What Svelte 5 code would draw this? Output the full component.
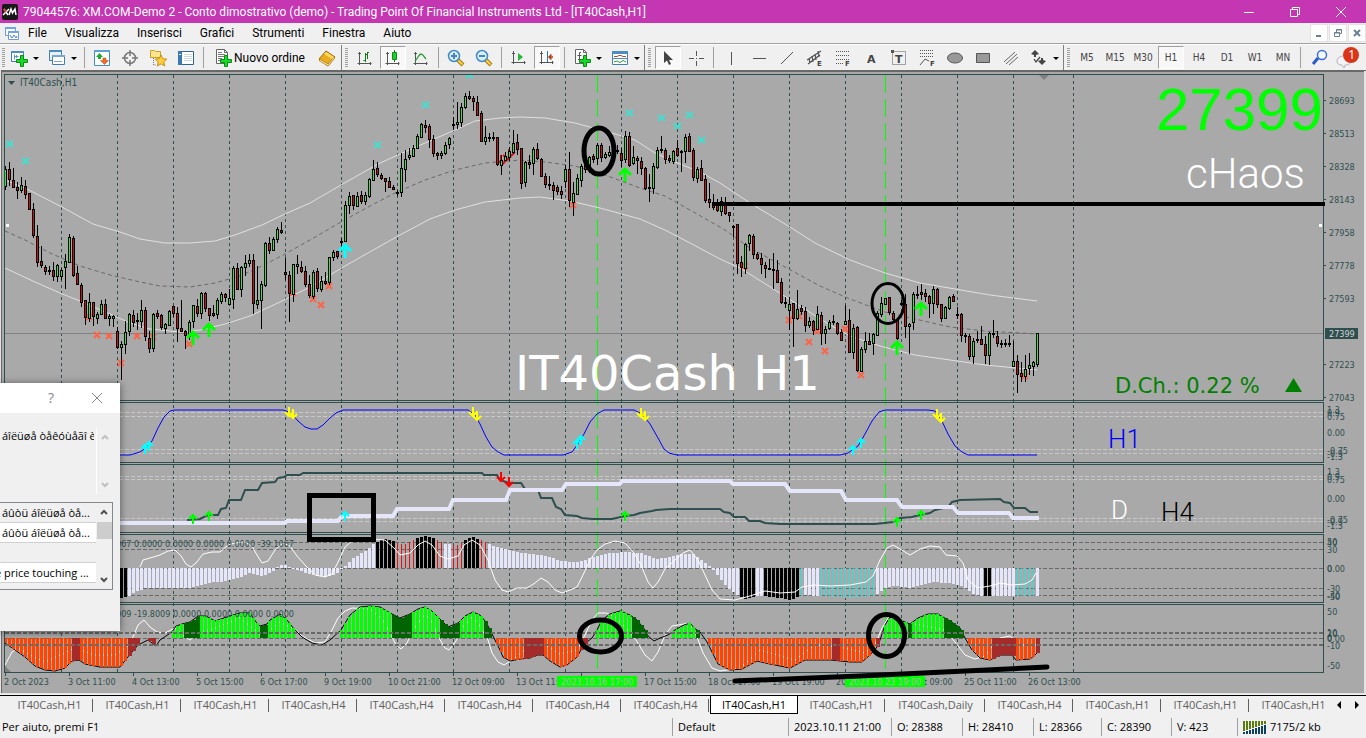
<script>
  const menus = ['File', 'Visualizza', 'Inserisci', 'Grafici', 'Strumenti', 'Finestra', 'Aiuto'];

  const tools = [
    { drop: 'newchart', label: 'Nuovo grafico' },
    { drop: 'profiles', label: 'Profili' },
    'sep',
    { icon: 'market', label: 'Market Watch' },
    { icon: 'target', label: 'Finestra dati' },
    { icon: 'navigator', label: 'Navigatore' },
    { icon: 'terminal', label: 'Terminale' },
    'sep',
    { icon: 'order', label: 'Nuovo ordine', text: true },
    { icon: 'editor', label: 'MetaEditor' },
    'group',
    { icon: 'bars', label: 'Grafico a barre' },
    { icon: 'candles', label: 'Candele', on: true },
    { icon: 'line', label: 'Grafico a linea' },
    'sep',
    { icon: 'zoomin', label: 'Ingrandisci' },
    { icon: 'zoomout', label: 'Riduci' },
    'sep',
    { icon: 'scroll', label: 'Scorrimento automatico' },
    { icon: 'shift', label: 'Spostamento grafico', on: true },
    'sep',
    { drop: 'indicators', label: 'Indicatori' },
    { drop: 'templates', label: 'Modelli' },
    'group',
    { icon: 'cursor', label: 'Cursore', on: true },
    { icon: 'cross', label: 'Mirino' },
    'sep',
    { icon: 'vline', label: 'Linea verticale' },
    { icon: 'hline', label: 'Linea orizzontale' },
    { icon: 'trend', label: 'Trendline' },
    { icon: 'channel', label: 'Canale equidistante' },
    { icon: 'fibo', label: 'Fibonacci' },
    { icon: 'text', label: 'Testo' },
    { icon: 'label', label: 'Etichetta' },
    { icon: 'fan', label: 'Espansione Fibonacci' },
    { icon: 'ellipse', label: 'Ellisse' },
    { icon: 'rect', label: 'Rettangolo' },
    { icon: 'cycle', label: 'Linee cicliche' },
    { drop: 'arrows', label: 'Frecce' },
    'group'
  ];
  const frames = ['M5', 'M15', 'M30', 'H1', 'H4', 'D1', 'W1', 'MN'];

  const tabs = ['H1', 'H1', 'H1', 'H4', 'H4', 'H4', 'H4', 'H4', 'H1', 'H1', 'Daily', 'H4', 'H1', 'H1', 'H1'];
  const activeTab = 8;

  // high, open, close, low for each hour, in chart units
  const candles = `166,186,169,190 162,169,179,186 168,180,187,188 182,187,190,199 177,190,185,193 180,186,194,199
    193,193,209,210 203,209,235,238 225,236,262,267 246,261,265,268 265,267,271,275 266,270,271,275 262,270,276,281
    264,276,265,282 268,276,270,280 254,267,261,289 234,262,237,263 236,238,275,277 266,273,284,285 283,285,302,307
    300,300,317,325 293,318,302,322 302,302,316,326 312,318,314,324 300,314,304,315 299,304,318,319 314,318,316,326
    315,318,316,327 327,331,347,349 341,347,344,380 321,344,332,354 313,331,314,336 310,315,322,327 313,320,321,330
    300,321,310,328 307,310,336,341 331,338,348,353 313,348,314,352 310,313,316,319 314,315,327,330 323,328,324,334
    310,325,311,326 306,306,313,317 307,313,328,342 300,328,331,332 330,331,335,349 320,336,322,340 305,321,305,328
    299,306,313,317 292,313,293,319 292,293,308,312 308,308,315,321 305,313,315,317 298,314,300,319 292,301,294,304
    293,294,297,302 289,304,298,305 266,299,268,309 263,268,289,290 266,289,267,297 255,267,263,276 254,263,260,267
    254,260,303,314 266,304,300,309 281,300,284,329 242,285,243,287 237,243,250,254 237,250,239,251 227,239,229,243
    222,230,232,234 258,272,274,280 271,275,293,322 264,294,264,302 255,266,264,274 261,267,271,273 266,271,284,287
    275,284,295,298 270,296,272,299 268,271,288,292 276,289,281,292 272,281,283,285 257,282,257,285 250,257,252,261
    251,251,256,259 238,241,242,248 201,241,205,242 192,205,196,214 195,195,205,210 192,206,196,207 191,195,201,204
    192,201,195,205 178,196,179,198 160,180,169,180 162,168,174,177 173,175,178,180 178,178,181,192 177,181,187,188
    185,187,189,190 190,192,193,196 153,192,168,197 150,169,159,182 148,157,155,160 145,156,148,156 134,148,136,149
    123,137,124,138 120,125,127,133 124,126,139,148 135,139,153,157 152,153,155,160 151,155,153,159 142,153,145,155
    137,144,138,149 117,125,124,130 102,124,122,129 103,122,107,127 93,107,96,109 91,96,98,100 96,98,101,111
    96,102,115,116 111,113,141,142 126,141,137,145 133,138,137,142 132,137,138,141 137,137,164,166 155,165,160,175
    152,160,156,160 147,157,151,161 130,152,143,154 134,142,149,155 148,148,183,189 161,182,162,187 155,162,164,169
    147,163,149,175 143,149,158,160 158,159,176,177 173,176,184,188 176,184,185,190 182,185,190,200 185,187,191,195
    186,191,194,199 165,181,169,188 152,169,200,207 182,202,193,216 174,194,178,195 164,180,166,187 164,165,169,173
    156,170,157,173 154,156,159,163 143,158,145,165 143,145,157,162 152,157,154,159 146,155,152,157 148,150,152,154
    145,150,151,154 148,153,160,167 131,159,136,163 132,136,165,167 146,163,157,165 156,158,160,174 157,161,168,175
    167,168,188,190 174,187,188,202 163,188,166,194 147,167,150,169 136,149,150,153 148,150,159,164 155,158,160,163
    150,161,151,164 140,148,155,157 150,152,151,172 134,151,137,163 133,136,151,152 148,150,177,181 167,178,169,183
    160,168,180,181 175,179,200,203 183,199,202,208 194,203,207,210 199,204,210,212 197,211,201,216 197,203,213,215
    212,212,215,222 225,226,227,237 224,224,263,274 256,262,267,277 243,268,244,274 234,243,235,251 234,236,254,259
    252,254,258,260 253,258,264,274 262,265,268,278 259,268,269,270 253,269,270,289 260,270,282,283 278,282,302,304
    297,302,303,308 297,310,304,330 303,303,318,347 290,318,309,320 305,308,311,315 307,311,325,332 317,325,321,328
    320,321,330,335 306,329,314,330 312,315,333,345 326,333,329,344 320,328,322,330 315,321,322,325 322,323,333,335
    329,332,340,341 305,324,321,325 309,320,352,353 324,352,328,359 326,327,370,372 347,371,349,372 332,349,341,353
    333,341,344,344 333,343,334,355 311,335,313,336 297,314,303,317 298,304,298,305 297,297,312,315 311,313,319,322
    318,320,338,340 300,303,304,306 294,304,326,338 323,326,324,354 292,322,294,330 286,294,295,299 284,292,294,300
    289,293,296,302 295,296,303,318 286,303,289,314 288,289,304,308 304,304,318,322 306,318,307,319 296,308,297,310
    294,296,301,302 307,314,315,319 313,314,335,342 333,335,336,343 334,336,356,360 338,356,341,364 331,340,339,343
    326,339,344,345 336,344,355,364 332,355,333,365 320,333,334,338 331,336,343,347 340,343,344,348 339,344,343,347
    335,343,344,347 341,366,361,367 355,361,374,393 362,373,376,382 355,376,369,382 353,368,365,375 361,366,362,376
    333,364,333,367`
    .trim()
    .split(/\s+/)
    .map((c) => c.split(',').map(Number));

  const box = (x, y, w, h) => `M${x} ${y}h${w}v${h}h${-w}z`;

  let black = '';
  let rising = '';
  let falling = '';
  candles.forEach(([high, open, close, low], i) => {
    const x = 5 + i * 4;
    const top = Math.min(open, close);
    const height = Math.abs(close - open) + 1;
    black += box(x, high, 1, low - high) + box(x - 1, top, 3, height);
    if (height > 2) {
      if (close < open) rising += box(x, top + 1, 1, height - 2);
      else falling += box(x, top + 1, 1, height - 2);
    }
  });

  const upper = '5,180 27,189 60,206 93,224 120,232 140,239 165,243 190,243 215,241 235,235 262,225 285,214 310,203 341,185 378,164 400,154 425,143 455,130 475,121 500,118 520,117 545,118 575,123 605,131 635,140 655,153 680,164 700,172 720,183 750,203 790,227 815,243 850,260 885,273 920,283 955,289 990,295 1037,301';
  const middle = '5,231 25,240 50,253 80,266 110,275 140,282 160,286 190,287 215,283 240,276 262,266 285,254 310,240 341,222 370,206 395,193 425,180 455,170 485,163 520,160 545,162 575,166 605,175 640,188 665,196 690,210 725,230 750,248 785,267 820,286 850,299 885,312 915,319 950,327 985,331 1037,334';
  const lower = '5,268 35,282 60,293 80,301 110,314 130,323 150,329 180,332 200,330 225,324 250,316 280,302 310,287 330,275 345,266 375,249 400,235 430,219 455,210 485,202 520,198 540,197 570,201 600,208 640,219 665,230 690,243 720,259 740,268 775,290 800,306 830,325 850,336 880,346 915,355 950,360 985,365 1037,370';

  const blue = '100,455 130,455 140,452 146,448 152,441 158,428 164,417 170,411 174,410 283,410 286,411 292,414 298,421 305,427 311,429 317,429 323,425 330,418 336,413 343,410 468,410 475,415 480,424 486,437 492,447 498,452 504,455 563,455 572,452 578,444 584,434 590,422 597,414 604,410 634,410 642,414 650,424 658,438 664,449 669,453 677,455 840,455 848,453 858,446 865,434 872,421 879,412 885,410 928,410 935,411 941,419 948,434 955,446 962,452 968,455 1037,455';
  const slate = '187,520 200,519 208,515 218,515 221,509 226,508 229,500 241,500 245,490 258,490 262,483 275,482 278,478 284,477 287,475 300,475 303,473 482,473 484,475 497,475 500,480 509,483 521,483 525,489 538,490 541,498 552,498 556,507 561,509 565,515 577,516 582,518 592,519 612,519 625,516 634,515 640,513 652,511 656,510 670,509 720,509 724,512 730,513 734,517 745,517 749,521 760,521 765,523 780,524 875,524 893,522 900,518 912,517 920,515 930,513 935,510 948,507 952,502 960,500 1000,499 1004,502 1010,503 1014,508 1025,508 1030,512 1038,512';
  const pale = '100,523 285,523 287,521 338,521 342,516 393,516 397,509 449,509 453,500 506,500 510,490 562,490 566,484 620,484 622,481 730,481 733,484 785,484 790,491 841,491 846,500 897,500 902,507 953,507 958,513 1009,513 1013,518 1039,518';
  const wave3 = '140,567 143,560 150,558 160,555 168,551 175,550 181,556 186,564 191,567 196,563 203,554 212,552 220,552 228,545 235,543 245,542 252,546 257,555 262,563 268,561 275,550 283,543 290,546 297,556 305,565 315,575 325,577 332,574 340,558 345,547 352,541 365,539 385,540 395,549 400,555 410,553 418,545 425,541 432,545 440,556 448,559 458,556 464,545 472,540 480,545 488,560 495,580 502,590 508,592 517,588 527,588 535,583 541,578 548,582 555,590 562,593 570,590 577,587 583,575 590,560 597,550 605,544 615,541 625,543 634,553 641,565 648,582 653,588 658,582 665,569 675,560 683,553 690,550 698,560 705,575 712,590 720,599 735,600 750,596 765,591 780,593 795,592 802,587 815,585 830,586 850,585 866,582 873,576 880,560 887,548 893,545 900,549 910,555 920,549 930,546 940,547 946,555 957,556 963,563 968,580 978,588 990,586 1000,583 1012,585 1025,584 1032,580 1036,573';
  const wave4 = '5,665 12,652 18,648 30,655 45,662 60,655 75,648 95,655 115,655 128,646 133,637 138,625 144,620 150,627 157,632 165,633 175,628 185,637 190,640 198,634 215,628 240,618 255,630 262,636 280,622 294,629 302,636 315,643 325,642 332,630 338,618 345,611 352,608 370,609 383,620 391,635 396,645 401,649 407,643 413,630 425,614 432,622 439,638 445,648 449,650 456,641 462,628 472,617 480,626 488,640 492,653 498,662 504,665 509,662 525,650 540,642 560,654 577,650 585,635 592,620 598,613 606,613 615,617 625,627 636,640 645,655 652,661 658,652 665,635 672,626 684,624 690,623 697,637 703,653 712,668 720,671 740,668 760,650 780,656 795,660 815,645 840,647 865,653 875,645 882,628 890,615 900,622 920,625 945,630 955,642 965,655 975,659 985,656 993,645 1000,638 1010,636 1020,645 1036,645';

  const toPoints = (s) => s.split(' ').map((p) => p.split(',').map(Number));

  // height of a curve at x
  function at(points, x) {
    let i = points.findIndex((p) => p[0] >= x);
    if (i < 0) return points[points.length - 1][1];
    if (i === 0) return points[0][1];
    const [x0, y0] = points[i - 1];
    const [x1, y1] = points[i];
    return Math.round(y0 + ((x - x0) / (x1 - x0)) * (y1 - y0));
  }

  const inside = (ranges, x) => ranges.some(([a, b]) => x >= a && x <= b);

  const env3 = toPoints('118,599 122,598 126,597 130,595 137,591 145,588 190,588 207,583 227,581 240,577 250,573 262,576 273,571 279,565 286,565 292,568 303,572 317,576 327,577 337,573 341,568 345,566 353,558 360,554 368,549 374,543 383,539 393,541 397,543 405,544 413,540 418,538 425,536 434,538 440,541 446,544 458,545 464,540 473,537 481,540 488,544 507,550 523,553 547,556 560,561 577,562 590,558 603,554 623,552 640,553 657,559 670,557 683,554 693,554 703,562 711,567 717,575 725,585 733,592 740,597 745,599 755,596 763,596 780,598 790,600 799,596 805,595 820,596 853,598 873,596 877,594 887,587 897,586 910,588 920,585 933,582 947,583 963,586 973,594 980,596 1036,596');
  const env4 = toPoints('5,643 15,650 25,657 35,666 45,670 55,671 65,668 72,661 79,660 85,664 100,667 120,667 127,658 132,652 138,645 148,640 156,646 160,640 172,632 176,626 182,624 190,622 198,616 206,616 215,621 230,616 240,613 250,613 256,622 260,626 267,624 270,620 280,614 287,620 294,629 302,637 312,643 322,645 330,640 341,630 350,615 360,607 370,606 380,607 392,614 400,618 410,614 418,609 425,607 432,611 440,619 448,627 458,623 465,616 473,612 480,615 486,622 491,632 495,640 500,650 503,657 510,661 520,659 530,658 537,655 543,655 550,661 560,667 567,665 577,657 582,648 587,642 592,638 597,630 602,620 610,614 620,611 630,615 637,620 645,630 648,636 654,641 660,638 668,635 675,630 684,625 690,623 694,628 700,632 707,642 712,652 718,664 730,670 742,669 757,661 770,664 790,668 805,660 831,660 850,662 862,662 870,655 877,647 880,640 885,625 890,617 900,620 910,624 918,618 928,614 938,614 943,617 950,621 960,628 965,638 972,650 980,658 990,660 1000,655 1012,655 1016,660 1030,659 1034,656 1037,653');

  const black3 = [[0, 128], [376, 395], [416, 436], [464, 480], [741, 755], [764, 800], [984, 992]];
  const red3 = [[396, 415], [436, 443], [452, 463], [481, 487]];
  const cyan3 = [[800, 803], [820, 874], [1016, 1035]];
  const lime4 = [[172, 184], [198, 259], [267, 295], [341, 391], [410, 439], [458, 483], [597, 631], [671, 695], [883, 907], [911, 943]];
  const dark4 = [[184, 198], [259, 267], [391, 410], [439, 458], [483, 491], [631, 648], [695, 699], [907, 911], [943, 964]];
  const brown4 = [[71, 79], [127, 139], [147, 155], [523, 543], [580, 588], [831, 838], [875, 880], [991, 1015], [1036, 1040]];
  const orange4 = [[0, 71], [79, 127], [496, 523], [543, 580], [708, 831], [838, 875], [967, 991], [1015, 1036]];

  const fills = { pale: '', black: '', red: '', cyan: '', lime: '', dark: '', brown: '', orange: '' };
  for (let i = 0; i < candles.length; i++) {
    const x = 5 + i * 4;
    if (x > 116) {
      const y = at(env3, x);
      const top = Math.min(y, 568);
      const h = Math.max(1, Math.abs(y - 568));
      if (inside(black3, x)) fills.black += box(x - 1, top, 3, h);
      else if (inside(red3, x)) fills.red += box(x, top, 1, h);
      else if (inside(cyan3, x)) fills.cyan += box(x, top, 1, h);
      else fills.pale += box(x - 1, top, 3, h);
    }
    const y = at(env4, x);
    const top = Math.min(y, 638);
    const h = Math.abs(y - 638);
    if (inside(dark4, x)) fills.dark += box(x - 1, top, 4, h);
    else if (inside(brown4, x)) fills.brown += box(x - 1, top, 4, h);
    else if (inside(lime4, x)) fills.lime += box(x - 1, top, 3, h);
    else if (inside(orange4, x)) fills.orange += box(x - 1, top, 3, h);
  }
  const edge4 = env4.map((p) => p.join()).join(' ');

  const panels = [[74, 326], [402, 60], [464, 68], [534, 68], [604, 68]];
  const days = [...Array(18).keys()].map((i) => 61 + i * 56).concat(1073);
  const levels = [412, 416, 449, 453, 476, 479, 518, 521];
  const levels3 = [542, 549, 568, 588, 595, 638];

  const prices = [[28693, 100], [28513, 133], [28328, 166], [28143, 199], [27958, 232], [27778, 265], [27593, 298], [27223, 364], [27043, 397]];
  const scale = [
    ['1.3', 409], ['0.9', 412], ['0.75', 416], ['0.00', 432], ['-0.75', 450], ['-0.9', 453], ['-1.3', 456],
    ['1.3', 471], ['0.9', 476], ['0.75', 479], ['0.00', 498], ['-0.75', 519], ['-0.9', 521], ['-1.3', 525],
    ['50', 541], ['40', 542], ['30', 549], ['0', 568], ['0.00', 568], ['-30', 588], ['-40', 595], ['-50', 596],
    ['50', 611], ['10', 632], ['20', 633], ['0', 637], ['0.00', 638], ['-10', 645], ['-50', 665]
  ];
  const dates = ['2 Oct 2023', '3 Oct 11:00', '4 Oct 13:00', '5 Oct 15:00', '6 Oct 17:00', '9 Oct 19:00', '10 Oct 21:00', '12 Oct 09:00', '13 Oct 11:00', '', '17 Oct 15:00', '18 Oct 17:00', '19 Oct 19:00', '20 Oct 21:00', '24 Oct 09:00', '25 Oct 11:00', '26 Oct 13:00'];

  const highs = [[9, 144], [25, 161], [377, 145], [425, 105], [469, 75], [629, 113], [661, 118], [677, 126], [689, 115], [701, 140]];
  const lows = [[89, 317], [97, 335], [109, 336], [121, 363], [137, 336], [153, 337], [189, 344], [293, 293], [313, 299], [321, 305], [329, 286], [573, 205], [745, 266], [789, 320], [799, 316], [809, 342], [817, 331], [825, 351], [845, 329], [861, 375], [1025, 376]];

  const signals = [
    ['lime', 193, 338, 14], ['lime', 209, 330, 14], ['lime', 625, 175, 14], ['lime', 897, 348, 14], ['lime', 921, 309, 14],
    ['cyan', 345, 251, 14],
    ['cyan', 145, 449, 10], ['cyan', 149, 446, 10], ['cyan', 577, 444, 10], ['cyan', 581, 440, 10], ['cyan', 853, 450, 10], ['cyan', 861, 443, 10],
    ['lime', 193, 519, 10], ['lime', 209, 516, 10], ['cyan', 345, 516, 10], ['lime', 625, 516, 10], ['lime', 897, 522, 10], ['lime', 921, 515, 10]
  ];
  const sells = [
    ['yellow', 289, 412], ['yellow', 293, 414], ['yellow', 473, 412], ['yellow', 477, 416], ['yellow', 641, 413], ['yellow', 645, 416],
    ['yellow', 937, 414], ['yellow', 941, 418], ['red', 501, 477], ['red', 509, 482]
  ];

  const cells = ['2023.10.11 21:00', 'O: 28388', 'H: 28410', 'L: 28366', 'C: 28390', 'V: 423'];
  const cellWidths = [103, 71, 71, 68, 70, 66];
</script>

{#snippet glyph(name)}
  <svg class="icon" viewBox="0 0 18 18" width="18" height="18" aria-hidden="true">
    {#if name === 'newchart' || name === 'order' || name === 'indicators'}
      {#if name === 'newchart'}
        <path d="M1.500 2.500h12v10h-12z" fill="#fff" stroke="#3f7fb5" />
        <path d="M1 2h13v2H1z" fill="#4c8cc4" />
        <path d="M4.500 5.500v5M4.500 7.500h4M6.500 6v3" stroke="#5c95c4" fill="none" />
      {:else}
        <path d="M2.500 .5h8l3 3v11h-11z" fill="#fff" stroke="#666" />
        <path d="M10.500.5v3h3" fill="none" stroke="#666" />
        {#if name === 'order'}
          <path d="M4 3.500h4M4 5.500h7M4 7.500h7M4 9.500h4M4 11.500h3" stroke="#777" />
        {:else}
          <path d="M8 3.500h-1.500v7H5M4.500 6.500h4" stroke="#555" fill="none" />
        {/if}
      {/if}
      <path d="M10.500 6.500h3v4h4v3h-4v4h-3v-4h-4v-3h4z" fill="#16dc28" stroke="#078c14" />
    {:else if name === 'profiles'}
      <path d="M1.500 1.500h12v10h-12z" fill="#e6f1fa" stroke="#3f7fb5" />
      <path d="M1 1h13v2H1z" fill="#4c8cc4" />
      <path d="M4.500 6.500h12v9h-12z" fill="#fff" stroke="#3f7fb5" />
      <path d="M4 6h13v2H4zM6 12h8v1H6z" fill="#78a8d0" />
    {:else if name === 'market'}
      <path d="M1.500 1.500h15v15h-15z" fill="#fff" stroke="#3f8fc5" />
      <path d="M1 1h16v2H1z" fill="#5ca0d4" />
      <path d="M6.500 4l3.500 4H8v2H5V8H3z" fill="#1dab2b" />
      <path d="M11.500 15.500l-4-4H10V9h3v2.500h2.500z" fill="#f26a2a" stroke="#c0400c" stroke-width=".5" />
    {:else if name === 'target'}
      <circle cx="9" cy="9" r="5.500" fill="none" stroke="#777" stroke-width="1.500" />
      <path d="M9 1v6M9 11v6M1 9h6M11 9h6" stroke="#777" stroke-width="1.500" />
    {:else if name === 'navigator'}
      <path d="M1.500 2.500v-1h4l1 1h5v6h-10z" fill="#ffe58a" stroke="#c9a02c" />
      <path d="M4.500 9v7h3" stroke="#777" fill="none" stroke-dasharray="1 1" />
      <path d="M12 6l1.800 3.700 4 .4-3 2.700.9 4.200-3.700-2.200L8.300 17l.9-4.200-3-2.700 4-.4z" fill="#ffce3c" stroke="#c98f12" />
    {:else if name === 'terminal'}
      <path d="M1.500 2.500h15v13h-15z" fill="#fff" stroke="#2f6496" />
      <path d="M1 2h4v14H1z" fill="#3a78b4" />
      <path d="M7 5.500h8M7 7.500h8M7 9.500h8M7 11.500h8" stroke="#c8d8e6" />
      <path d="M2 5.500h2" stroke="#fff" />
    {:else if name === 'editor'}
      <path d="M1 10l7-8 9 6-7 9z" fill="#e8ac1c" stroke="#9c6a08" />
      <path d="M1.500 10l8.500 5 6.500-7.500v2L10 17l-8.500-5z" fill="#fff0b0" stroke="#9c6a08" stroke-width=".7" />
      <path d="M8 3l8 5-2 2-8-5z" fill="#ffd860" />
    {:else if name === 'bars' || name === 'candles' || name === 'line'}
      <path d="M3.500 3v13M1.500 14.500h14M2 4.500h3M14.500 13v3" stroke="#555" fill="none" />
      {#if name === 'bars'}
        <path d="M9.500 4v9M11.500 3v7M7.500 11.500h2M9.500 5.500h2M13 3.500h-2" stroke="#137a1c" fill="none" />
      {:else if name === 'candles'}
        <path d="M10.500 1v12" stroke="#137a1c" />
        <path d="M8.500 3.500h4v7h-4z" fill="#18d428" stroke="#0c8c18" />
      {:else}
        <path d="M3 12c3-3 4-7 6-7s3 3 5 5" stroke="#2c9c38" fill="none" stroke-width="1.300" />
      {/if}
    {:else if name === 'zoomin' || name === 'zoomout'}
      <path d="M10 10l6 6" stroke="#a87810" stroke-width="4" />
      <path d="M10 10l5.500 5.500" stroke="#ffd440" stroke-width="2" />
      <circle cx="7" cy="7" r="5.500" fill="#d4efff" stroke="#4488c4" stroke-width="1.500" />
      <path d="M4 7h6" stroke="#4a84b4" stroke-width="2" />
      {#if name === 'zoomin'}<path d="M7 4v6" stroke="#4a84b4" stroke-width="2" />{/if}
    {:else if name === 'scroll' || name === 'shift'}
      <path d="M3.500 2v13M1.500 13.500h14M2 4.500h3M14.500 12v3" stroke="#555" fill="none" />
      {#if name === 'scroll'}
        <path d="M8 4l5 4-5 4z" fill="#28b43c" />
      {:else}
        <path d="M9.500 2v11" stroke="#2878b4" />
        <path d="M15 8h-4M13.500 5.500L11 8l2.500 2.500" stroke="#b43c14" fill="none" stroke-width="1.500" />
      {/if}
    {:else if name === 'templates'}
      <path d="M1.500 2.500h15v13h-15z" fill="#fff" stroke="#3f7fb5" />
      <path d="M1 2h16v3H1zM1 9h16v1H1z" fill="#4c8cc4" />
      <path d="M3 7.500h3l2-1h2l2 1h3" stroke="#a84c34" fill="none" />
      <path d="M3 13l3-1 3 1.500 3-2 3 1.500" stroke="#2c9c38" fill="none" />
    {:else if name === 'cursor'}
      <path d="M5 2v12l3-2.500L10 16l2-1-2-4h4z" fill="#444" />
    {:else if name === 'cross'}
      <path d="M9.500 2v5M9.500 12v5M2 9.500h5M12 9.500h5M9 9.500h1" stroke="#555" />
    {:else if name === 'vline'}
      <path d="M9.500 3v13" stroke="#555" />
    {:else if name === 'hline'}
      <path d="M3 9.500h13" stroke="#555" />
    {:else if name === 'trend'}
      <path d="M3 15L15 3" stroke="#555" />
    {:else if name === 'channel'}
      <path d="M1 11L15 2M2 15L14 6M3 9l1 5M6 7l1 6M9 5l1 6M12 2l1 6" stroke="#555" stroke-width="1.300" />
      <text x="11" y="17">E</text>
    {:else if name === 'fibo'}
      <path d="M2 2.500h14M2 6.500h14M2 10.500h14M2 14.500h8" stroke="#555" stroke-dasharray="1 1" />
      <text x="11" y="17">F</text>
    {:else if name === 'text'}
      <text class="big" x="5" y="14">A</text>
    {:else if name === 'label'}
      <path d="M2.500 2.500h13v13h-13z" fill="none" stroke="#555" stroke-dasharray="1 1" />
      <path d="M1 1h3v3H1z" fill="#555" />
      <text class="big" x="5" y="14">T</text>
    {:else if name === 'fan'}
      <path d="M2 1.500h14M2 4.500h14M2 7.500h14" stroke="#555" stroke-dasharray="1 1" />
      <path d="M2 16l5-6 4 2" stroke="#555" fill="none" />
      <text x="12" y="17">F</text>
    {:else if name === 'ellipse'}
      <ellipse cx="9" cy="9" rx="7.500" ry="5" fill="#999" stroke="#555" />
    {:else if name === 'rect'}
      <path d="M2.500 4.500h13v9h-13z" fill="#999" stroke="#555" />
    {:else if name === 'cycle'}
      <path d="M2 13L13 3M4 15L15 5M7 16l9-8" stroke="#666" />
    {:else if name === 'arrows'}
      <path d="M5 1l4 4-3 1v2H4V6L1 5zM13 9v2l3 1-4 4-4-4 3-1V9z" fill="#444" />
      <path d="M4 10l2 3 4-5" stroke="#444" fill="none" stroke-width="1.300" />
    {:else if name === 'search'}
      <circle cx="11" cy="6" r="4.500" fill="#f4f8ff" stroke="#3c6ce0" stroke-width="1.500" />
      <path d="M7 9l-5 6" stroke="#2c58cc" stroke-width="3" />
    {/if}
  </svg>
{/snippet}

<div class="window">
  <header class="title">
    <svg class="logo" viewBox="0 0 16 16" width="16" height="16" aria-hidden="true">
      <rect width="16" height="16" rx="2" fill="#181818" />
      <path d="M2 5l4 6M7 5l-6 6" stroke="#fff" stroke-width="1.500" />
      <path d="M7 11l2-6 1.500 4L13 5l1 6" stroke="#fff" stroke-width="1.500" fill="none" />
      <path d="M2 5l2 3" stroke="#e03030" stroke-width="1.500" />
    </svg>
    <h1>79044576: XM.COM-Demo 2 - Conto dimostrativo (demo) - Trading Point Of Financial Instruments Ltd - [IT40Cash,H1]</h1>
    <div class="controls">
      <button aria-label="Riduci a icona"><svg viewBox="0 0 12 12" width="12" height="12"><path d="M1 6.500h10" /></svg></button>
      <button aria-label="Ripristina"><svg viewBox="0 0 12 12" width="12" height="12"><path d="M1.500 3.500h7v7h-7zM3.500 3V1.500h7v7H9" /></svg></button>
      <button aria-label="Chiudi"><svg viewBox="0 0 12 12" width="12" height="12"><path d="M1 1l10 10M11 1L1 11" /></svg></button>
    </div>
  </header>

  <nav class="menu">
    <svg viewBox="0 0 14 14" width="14" height="14" aria-hidden="true">
      <path d="M.5 1.500h10v8H.5z" fill="#fff" stroke="#6c9cdc" />
      <path d="M0 1h11v2H0zM3 5h11v2H3z" fill="#74a4e4" />
      <path d="M3.500 5.500h10v8h-10z" fill="#fff" stroke="#6c9cdc" />
      <path d="M3 5h11v2H3z" fill="#74a4e4" />
      <path d="M5 9l2 3 2-3 2 3 1-2" fill="none" stroke="#4c84cc" />
    </svg>
    {#each menus as item}
      <button>{item}</button>
    {/each}
    <div class="mdi">
      <button aria-label="Riduci grafico"><svg viewBox="0 0 10 10" width="10" height="10"><path d="M2 8h5" stroke-width="2" /></svg></button>
      <button aria-label="Ripristina grafico"><svg viewBox="0 0 10 10" width="10" height="10"><path d="M1.500 4.500h5v4h-5zM3.500 4V1.500h5v4H7M3 2h6M1 5h6" /></svg></button>
      <button aria-label="Chiudi grafico"><svg viewBox="0 0 10 10" width="10" height="10"><path d="M2 2l6 6M8 2L2 8" stroke-width="2" /></svg></button>
    </div>
  </nav>

  <div class="toolbar">
    <span class="grip first"></span>
    {#each tools as tool}
      {#if tool === 'sep'}
        <span class="sep"></span>
      {:else if tool === 'group'}
        <span class="group"><span class="grip"></span></span>
      {:else if tool.drop}
        <button class="drop" aria-label={tool.label}>{@render glyph(tool.drop)}<span class="caret"></span></button>
      {:else if tool.text}
        <button class="wide">{@render glyph(tool.icon)}{tool.label}</button>
      {:else}
        <button class:on={tool.on} aria-label={tool.label}>{@render glyph(tool.icon)}</button>
      {/if}
    {/each}
    {#each frames as frame}
      <button class="frame" class:on={frame === 'H1'}>{frame}</button>
    {/each}
    <span class="sep"></span>
    <button class="search" aria-label="Cerca">{@render glyph('search')}</button>
    <button class="news" aria-label="Messaggi">
      <svg viewBox="0 0 24 24" width="24" height="24">
        <path d="M1 15c0-3 3-5 7-5s7 2 7 5-3 4-6 4l-1 3-2-3c-3 0-5-1-5-4z" fill="#f4f4f8" stroke="#b4b4bc" />
        <circle cx="15" cy="9" r="8" fill="#dc3418" />
        <text class="count" x="12" y="13">1</text>
      </svg>
    </button>
  </div>

  <main>
    <svg class="chart" viewBox="0 70 1366 624" role="img" aria-label="IT40Cash,H1">
      <defs>
        <clipPath id="plot"><path d="M5 75h1318v325H5z" /></clipPath>
      </defs>
      <rect y="70" width="1366" height="624" fill="#a9a9a9" />
      <path class="crisp" d="M0 70h1366v1H0zM1 71h1363v1H1zM1 71h1v622H1z" fill="#696969" />
      <path class="crisp" d="M0 70h1v624H0zM1364 71h2v623h-2zM0 693h1366v1H0z" fill="#e3e3e3" />

      <g class="crisp">
        {#each days as x}
          <path d="M{x + 0.5} 75V672" stroke="#2f4f4f" stroke-dasharray="3 3" />
        {/each}
        {#each levels as y}
          <path d="M5 {y + 0.5}H1323" stroke="#c8c8c8" stroke-dasharray="4 2" />
        {/each}
        {#each levels3 as y}
          <path d="M5 {y + 0.5}H1323" stroke="#696969" stroke-dasharray="4 2" />
        {/each}
        <path d="M597.500 75V672M885.500 75V672" stroke="#0f0" stroke-dasharray="18 6" />
        <path d="M5 333.500H1323" stroke="#808080" />
      </g>

      <g clip-path="url(#plot)">
        <polyline points={upper} class="band" />
        <polyline points={lower} class="band" />
        <polyline points={middle} class="band mid" />
        {#each highs as [x, y]}
          <path d="M{x - 3} {y - 3}l7 6m0 -6l-7 6" stroke="#40e0d0" stroke-width="2" />
        {/each}
        {#each lows as [x, y]}
          <path d="M{x - 3} {y - 3}l6 6m0 -6l-6 6" stroke="#ff6347" stroke-width="2" />
        {/each}
        <path d="M499 161l3 4 6-7M503 155l5 4 7-7M501 155v10M509 149v11" stroke="#f00" stroke-width="2" fill="none" />
        <g class="crisp">
          <path d={black} />
          <path d={rising} fill="#32ea32" />
          <path d={falling} fill="#d01010" />
        </g>
      </g>

      <polyline points={blue} fill="none" stroke="#00f" />
      <polyline points={slate} fill="none" stroke="#2f4f4f" stroke-width="2" />
      <polyline points={pale} fill="none" stroke="#e6e6fa" stroke-width="4" />

      <g class="crisp">
        <path d={fills.pale} fill="#e6e6fa" />
        <path d={fills.black} />
        <path d={fills.red} fill="#e01414" />
        <path d={fills.cyan} fill="#22e6e6" />
      </g>
      <polyline points={wave3} fill="none" stroke="#fff" />

      <polyline points={wave4} fill="none" stroke="#fff" />
      <polyline points={edge4} fill="none" stroke="#000" />
      <g class="crisp">
        <path d={fills.orange} fill="#ff4500" />
        <path d={fills.brown} fill="#a52a2a" />
        <path d={fills.lime} fill="#0f0" />
        <path d={fills.dark} fill="#006400" />
        <path d="M5 633H1323M5 645H1323" stroke="#696969" stroke-width="2" stroke-dasharray="4 2" />
      </g>

      {#each signals as [color, x, y, size]}
        <path d="M{x} {y + size / 2}v{-size + 2}M{x - size / 2 + 1} {y}l{size / 2 - 1} {-size / 2 + 1}l{size / 2 - 1} {size / 2 - 1}" stroke={color} stroke-width={size > 10 ? 3 : 2} fill="none" />
      {/each}
      {#each sells as [color, x, y]}
        <path d="M{x} {y - 5}v9M{x - 4} {y}l4 4l4 -4" stroke={color} stroke-width="2" fill="none" />
      {/each}

      <g class="crisp" fill="none" stroke="#2f4f4f">
        {#each panels as [y, h]}
          <rect x="4.500" y={y + 0.5} width="1319" height={h} />
        {/each}
        {#each prices as [, y]}
          <path d="M1324 {y + 0.5}h2" />
        {/each}
        {#each dates as _, i}
          <path d="M{5.5 + i * 64} 673v3" />
        {/each}
      </g>

      <g class="axis">
        {#each prices as [price, y]}
          <text x="1329" y={y + 4}>{price}</text>
        {/each}
        {#each scale as [value, y]}
          <text x="1327" y={y + 4}>{value}</text>
        {/each}
        {#each dates as date, i}
          <text x={4 + i * 64} y="685">{date}</text>
        {/each}
        <rect x="1325" y="328" width="33" height="11" />
        <text x="1329" y="337" class="last">27399</text>
        <text class="name" x="20" y="86">IT40Cash,H1</text>
        <path d="M8 81h7l-3.500 4z" />
        <text x="294" y="547" text-anchor="end">-39.1067 0.0000 0.0000 0.0000 0.0000 -39.1067</text>
        <text x="294" y="617" text-anchor="end">-19.8009 -19.8009 0.0000 0.0000 0.0000 0.0000</text>
      </g>
      <g class="stamp">
        <rect x="557" y="676" width="80" height="11" />
        <rect x="845" y="676" width="80" height="11" />
        <text x="597" y="685">2023.10.16 17:00</text>
        <text x="885" y="685">2023.10.23 19:00</text>
      </g>

      <path d="M1039 75h10l-5 5zM5 666v6h6z" fill="#808080" />
      <path d="M6 224h3v3H6zM1319 224h3v3h-3z" fill="#fff" />

      <text class="price" x="1156" y="130">27399</text>
      <text class="din" x="1186" y="188" font-size="42" fill="#fff">cHaos</text>
      <text class="symbol" x="515" y="390">IT40Cash H1</text>
      <text class="change" x="1115" y="393">D.Ch.: 0.22 %</text>
      <path d="M1285 392h17l-8.500-14z" fill="#008000" />
      <text class="din" x="1108" y="448" font-size="26" fill="#00f">H1</text>
      <text class="din" x="1111" y="519" font-size="26" fill="#fff">D</text>
      <text class="din" x="1161" y="521" font-size="26">H4</text>

      <g fill="none" stroke="#000" stroke-width="5">
        <path d="M712 204H1325" stroke-width="4" />
        <rect x="309.500" y="495.500" width="64" height="44" />
        <ellipse cx="599" cy="151" rx="15" ry="23" />
        <ellipse cx="888" cy="303.500" rx="16" ry="20" stroke-width="3" />
        <ellipse cx="600.500" cy="636" rx="21" ry="16" />
        <ellipse cx="886.500" cy="635.500" rx="18" ry="21" />
        <path d="M735 681L860 676 1047 667" stroke-linecap="round" />
      </g>
    </svg>

    <section class="dialog">
      <div class="dialog-title">
        <button aria-label="Guida">?</button>
        <button aria-label="Chiudi finestra"><svg viewBox="0 0 12 12" width="12" height="12"><path d="M1 1l10 10M11 1L1 11" stroke="#888" /></svg></button>
      </div>
      <div class="note">
        <p>áîëüøå òåêóùåãî èëè</p>
        <div class="scroll faint">
          <svg viewBox="0 0 8 6" width="8" height="6"><path d="M1 5l3-3 3 3" /></svg>
          <svg viewBox="0 0 8 6" width="8" height="6"><path d="M1 1l3 3 3-3" /></svg>
        </div>
      </div>
      <div class="list">
        <ul>
          <li class="shade">áûòü áîëüøå òå...</li>
          <li>áûòü áîëüøå òå...</li>
          <li class="shade"></li>
          <li class="tight">e price touching ...</li>
        </ul>
        <div class="scroll">
          <svg viewBox="0 0 8 6" width="8" height="6"><path d="M1 5l3-3 3 3" /></svg>
          <span class="thumb"></span>
          <svg viewBox="0 0 8 6" width="8" height="6"><path d="M1 1l3 3 3-3" /></svg>
        </div>
      </div>
    </section>
  </main>

  <div class="tabs">
    <div class="strip">
      {#each tabs as tab, i}
        <button class:active={i === activeTab} class:daily={tab === 'Daily'}>IT40Cash,{tab}</button>
      {/each}
    </div>
    <button class="arrow" aria-label="Indietro"><svg viewBox="0 0 6 8" width="6" height="8"><path d="M5 0v8L1 4z" /></svg></button>
    <button class="arrow" aria-label="Avanti"><svg viewBox="0 0 6 8" width="6" height="8"><path d="M1 0v8l4-4z" /></svg></button>
  </div>

  <footer>
    <span class="help">Per aiuto, premi F1</span>
    <span class="profile">Default</span>
    {#each cells as cell, i}
      <span style:width="{cellWidths[i]}px">{cell}</span>
    {/each}
    <span class="traffic">
      <svg viewBox="0 0 24 14" width="24" height="14" aria-hidden="true">
        {#each Array(8) as _, i}
          <rect x={i * 3} y="1" width="2" height={10 - i} fill="#5c7c10" />
          <rect x={i * 3} y={12 - i} width="2" height={2 + i} fill="#104060" />
        {/each}
      </svg>
      7175/2 kb
    </span>
  </footer>
</div>

<style>
  :global(body) {
    margin: 0;
    background: #f0f0f0;
  }

  .window {
    font: 11px/16px 'Open Sans', 'Noto Sans', sans-serif;
    color: #000;
    background: #f0f0f0;
    overflow: hidden;
  }

  button {
    padding: 0;
    border: 0;
    background: none;
    font: inherit;
    color: inherit;
    display: flex;
    align-items: center;
    justify-content: center;
    box-sizing: border-box;
    flex: none;
  }

  svg {
    display: block;
    flex: none;
  }

  .crisp {
    shape-rendering: crispEdges;
  }

  .title {
    display: flex;
    align-items: center;
    height: 23px;
    padding-left: 2px;
    background: #c436b2;
    color: #fff;
  }

  h1 {
    flex: 1;
    margin: 0 0 0 5px;
    font: 12px/16px Roboto, sans-serif;
    white-space: nowrap;
  }

  .controls {
    display: flex;
    margin-right: 2px;
  }

  .controls button {
    width: 46px;
    height: 20px;
  }

  .controls path {
    fill: none;
    stroke: #fff;
  }

  .menu {
    display: flex;
    align-items: center;
    height: 20px;
    padding-left: 5px;
    border-bottom: 1px solid #a0a0a0;
    font: 12px/16px Roboto, sans-serif;
  }

  .menu > button {
    margin-left: 9px;
    margin-right: 9px;
  }

  .mdi {
    display: flex;
    margin-left: auto;
    gap: 1px;
  }

  .mdi button {
    width: 18px;
    height: 18px;
    border: 1px solid #e3e3e3;
    background: #fff;
  }

  .mdi path {
    fill: none;
    stroke: #6c8094;
  }

  .toolbar {
    display: flex;
    align-items: center;
    height: 26px;
    border-top: 1px solid #fff;
    box-sizing: border-box;
  }

  .toolbar button {
    width: 28px;
    height: 23px;
  }

  .toolbar .on {
    width: 26px;
    margin: 0 1px;
    border: 1px solid;
    border-color: #a0a0a0 #fff #fff #a0a0a0;
    background: #f8f8f8;
  }

  .toolbar .drop {
    width: 38px;
    justify-content: flex-start;
    padding-left: 5px;
    gap: 2px;
  }

  .toolbar .wide {
    width: 106px;
    justify-content: flex-start;
    padding-left: 7px;
    gap: 2px;
    font: 12px/16px Roboto, sans-serif;
    white-space: nowrap;
  }

  .toolbar .frame {
    font: 10px 'DejaVu Sans Condensed', 'DejaVu Sans', sans-serif;
    color: #444;
  }

  .toolbar .search {
    margin-left: auto;
  }

  .toolbar .news {
    margin-right: 4px;
  }

  .caret {
    margin: 1px 0 0 3px;
    border: 3px solid transparent;
    border-top-color: #000;
    border-bottom: 0;
  }

  .sep,
  .group {
    display: flex;
    align-items: center;
    flex: none;
    width: 7px;
    height: 21px;
  }

  .sep::before {
    content: '';
    width: 1px;
    height: 100%;
    margin-left: 3px;
    background: #a0a0a0;
  }

  .group {
    width: 9px;
    height: 25px;
    border-left: 1px solid #808080;
  }

  .grip {
    width: 3px;
    height: 19px;
    margin-left: 3px;
    background: repeating-linear-gradient(#a0a0a0 0 1px, transparent 1px 2px);
  }

  .grip.first {
    margin: 0 0 0 2px;
  }

  .icon text {
    font: bold 7px 'DejaVu Sans', sans-serif;
    fill: #444;
  }

  .icon .big {
    font-size: 11px;
  }

  .count {
    font: 13px 'Open Sans', sans-serif;
    fill: #fff;
  }

  main {
    position: relative;
  }

  .chart {
    width: 100%;
    height: auto;
  }

  .band {
    fill: none;
    stroke: #e0e0e0;
  }

  .mid {
    stroke: #696969;
    stroke-dasharray: 4 3;
  }

  .axis {
    font: 9px 'DejaVu Sans Condensed', 'DejaVu Sans', sans-serif;
    fill: #2f4f4f;
  }

  .axis .name {
    font-size: 10px;
  }

  .axis .last {
    fill: #d3d3d3;
  }

  .stamp {
    font: 9px 'DejaVu Sans Condensed', 'DejaVu Sans', sans-serif;
    fill: #0f0;
  }

  .stamp text {
    fill: #b4b4b4;
    text-anchor: middle;
  }

  .price {
    font: 60px 'Liberation Sans', Arial, sans-serif;
    fill: #0f0;
  }

  .din {
    font-family: Roboto, sans-serif;
    font-weight: 300;
  }

  .symbol {
    font: 48px 'DejaVu Sans', Verdana, sans-serif;
    fill: #fff;
  }

  .change {
    font: 21px 'DejaVu Sans', Verdana, sans-serif;
    fill: #008000;
  }

  .dialog {
    position: absolute;
    left: 0;
    top: 313px;
    width: 120px;
    height: 248px;
    background: #f0f0f0;
    box-shadow: 0 1px 8px rgba(0, 0, 0, 0.5);
    overflow: visible;
  }

  .dialog-title {
    display: flex;
    justify-content: flex-end;
    height: 30px;
    background: #fff;
    color: #888;
    font-size: 14px;
  }

  .dialog-title button {
    width: 46px;
  }

  .note {
    display: flex;
    justify-content: space-between;
    height: 66px;
    margin: 15px 8px 0 0;
  }

  .note p {
    width: 92px;
    margin: 0;
    padding-left: 2px;
    overflow: hidden;
    white-space: nowrap;
  }

  .scroll {
    display: flex;
    flex-direction: column;
    align-items: center;
    justify-content: space-between;
    box-sizing: border-box;
    width: 16px;
    padding: 6px 0;
  }

  .scroll path {
    fill: none;
    stroke: #505050;
    stroke-width: 2;
  }

  .faint path {
    stroke: #c0c0c0;
  }

  .faint {
    border-left: 1px solid #fff;
  }

  .thumb {
    width: 15px;
    height: 17px;
    margin-bottom: 31px;
    background: #cdcdcd;
  }

  .list {
    display: flex;
    height: 86px;
    margin: 8px 7px 0 0;
    border: 1px solid #828790;
    border-left: 0;
  }

  ul {
    flex: 1;
    margin: 0;
    padding: 0;
    list-style: none;
  }

  li {
    height: 19px;
    padding-left: 2px;
    border-bottom: 1px solid #d0d0d0;
    background: #fff;
    line-height: 20px;
    white-space: nowrap;
  }

  li.tight {
    padding: 0;
    text-indent: -5px;
    overflow: hidden;
  }

  .shade {
    background: #f0f0f0;
  }

  .tabs {
    display: flex;
    align-items: stretch;
    box-sizing: border-box;
    height: 22px;
    padding: 1px 0 1px 6px;
    color: #606060;
    background: linear-gradient(#000, #000) 0 1px / 100% 1px no-repeat;
  }

  .strip {
    display: flex;
    flex: 1;
    overflow: hidden;
  }

  .strip button {
    width: 88px;
    border-right: 1px solid transparent;
    background: linear-gradient(#606060, #606060) 100% 50% / 1px 13px no-repeat;
  }

  .strip .daily {
    width: 100px;
  }

  .strip .active {
    border: 1px solid #000;
    background: #fff;
    color: #000;
    height: 19px;
  }

  .arrow {
    width: 18px;
  }

  footer {
    display: flex;
    align-items: center;
    height: 22px;
    white-space: nowrap;
  }

  footer span {
    box-sizing: border-box;
    height: 18px;
    padding-left: 5px;
    border-left: 1px solid #a0a0a0;
    line-height: 18px;
    flex: none;
  }

  footer .help {
    flex: 1;
    padding-left: 2px;
    border: 0;
  }

  footer .profile {
    width: 116px;
  }

  footer .traffic {
    display: flex;
    align-items: center;
    gap: 3px;
    width: 129px;
  }
</style>
